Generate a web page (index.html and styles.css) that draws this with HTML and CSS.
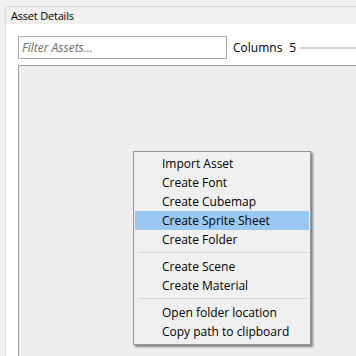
FILE: index.html
```html
<!DOCTYPE html>
<html lang="en">
<head>
    <meta charset="UTF-8">
    <title>Asset Details</title>
    <link rel="stylesheet" href="styles.css">
</head>
<body>
    <div class="window">
        <div class="header">Asset Details</div>
        <div class="panel">
            <div class="toolbar">
                <input class="filter" placeholder="Filter Assets...">
                <span class="label">Columns</span>
                <span class="value">5</span>
                <div class="slider"></div>
            </div>
            <div class="list"></div>
        </div>
    </div>
    <div class="menu">
        <div class="item">Import Asset</div>
        <div class="item">Create Font</div>
        <div class="item">Create Cubemap</div>
        <div class="item active">Create Sprite Sheet</div>
        <div class="item">Create Folder</div>
        <div class="sep"></div>
        <div class="item">Create Scene</div>
        <div class="item">Create Material</div>
        <div class="sep"></div>
        <div class="item">Open folder location</div>
        <div class="item">Copy path to clipboard</div>
    </div>
</body>
</html>
```

FILE: styles.css
```css
body {
    margin: 0;
    padding: 0;
    background-color: #f0f0f0;
    font-family: "Open Sans", "Noto Sans", sans-serif;
    overflow: hidden;
}
.window {
    margin: 6px 0 0 5px;
    height: 350px;
    border-top: 1px solid #dadada;
    border-left: 1px solid #dadada;
    display: flex;
    flex-direction: column;
}
.header {
    height: 17px;
    line-height: 17px;
    padding-left: 5px;
    font-size: 11px;
    letter-spacing: -0.2px;
    color: #000;
    background-color: #f0f0f0;
}
.panel {
    flex: 1;
    background-color: #fff;
    padding: 12px 0 0 12px;
    display: flex;
    flex-direction: column;
}
.toolbar {
    display: flex;
    align-items: center;
    height: 23px;
}
.filter {
    box-sizing: border-box;
    width: 209px;
    height: 23px;
    margin: 0;
    border: 1px solid #abadb3;
    padding: 0 3px;
    font-family: inherit;
    font-size: 12px;
    outline: none;
}
.filter::placeholder {
    color: #6d6d6d;
    font-style: italic;
}
.label {
    margin-left: 6px;
    font-size: 12px;
}
.value {
    margin-left: 7px;
    font-size: 12px;
}
.slider {
    flex: 1;
    height: 2px;
    margin-left: 4px;
    background-color: #d6d6d6;
}
.list {
    flex: 1;
    margin-top: 6px;
    border-top: 1px solid #a0a0a0;
    border-left: 1px solid #a0a0a0;
    background-color: #eeeeee;
}
.menu {
    position: absolute;
    left: 133px;
    top: 151px;
    width: 174px;
    padding: 2px 1px 3px;
    border: 1px solid #979797;
    background-color: #f0f0f0;
    box-shadow: 2px 2px 2px rgba(0, 0, 0, 0.45);
    font-size: 12px;
    color: #000;
}
.item {
    height: 19px;
    line-height: 19px;
    padding-left: 27px;
    white-space: nowrap;
}
.item.active {
    background-color: #99c9f3;
}
.sep {
    height: 1px;
    margin: 3px 1px 4px 4px;
    background-color: #d7d7d7;
}
```
